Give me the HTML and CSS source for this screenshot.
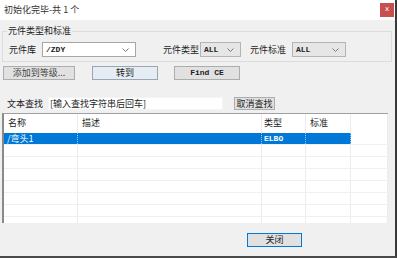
FILE: index.html
```html
<!DOCTYPE html>
<html lang="zh">
<head>
  <meta charset="UTF-8" />
  <title>初始化完毕-共 1 个</title>
  <link rel="stylesheet" href="styles.css">
</head>
<body>
  <div class="window">
    <div class="titlebar">
      <span class="title">初始化完毕-共 1 个</span>
      <span class="close">x</span>
    </div>

    <fieldset class="group">
      <legend>元件类型和标准</legend>
      <div class="row">
        <label class="lbl lib">元件库</label>
        <div class="combo combo-lib">
          <span class="mono">/ZDY</span>
          <svg class="chev" viewBox="0 0 7 4"><polyline points="0.5,0.5 3.5,3.5 6.5,0.5"/></svg>
        </div>
        <label class="lbl type">元件类型</label>
        <div class="combo combo-type gray">
          <span class="mono">ALL</span>
          <svg class="chev" viewBox="0 0 7 4"><polyline points="0.5,0.5 3.5,3.5 6.5,0.5"/></svg>
        </div>
        <label class="lbl std">元件标准</label>
        <div class="combo combo-std gray">
          <span class="mono">ALL</span>
          <svg class="chev" viewBox="0 0 7 4"><polyline points="0.5,0.5 3.5,3.5 6.5,0.5"/></svg>
        </div>
      </div>
    </fieldset>

    <div class="buttons">
      <button class="btn btn-add">添加到等级...</button>
      <button class="btn btn-goto">转到</button>
      <button class="btn btn-find">Find CE</button>
    </div>

    <div class="search">
      <label class="lbl">文本查找</label>
      <div class="input">[输入查找字符串后回车]</div>
      <button class="btn btn-cancel">取消查找</button>
    </div>

    <div class="list">
      <div class="lrow head">
        <div class="c c1">名称</div>
        <div class="c c2">描述</div>
        <div class="c c3">类型</div>
        <div class="c c4">标准</div>
        <div class="c c5"></div>
      </div>
      <div class="lrow sel">
        <div class="c c1">/弯头1</div>
        <div class="c c2"></div>
        <div class="c c3 mono">ELBO</div>
        <div class="c c4"></div>
        <div class="c c5"></div>
      </div>
      <div class="lrow"><div class="c c1"></div><div class="c c2"></div><div class="c c3"></div><div class="c c4"></div><div class="c c5"></div></div>
      <div class="lrow"><div class="c c1"></div><div class="c c2"></div><div class="c c3"></div><div class="c c4"></div><div class="c c5"></div></div>
      <div class="lrow"><div class="c c1"></div><div class="c c2"></div><div class="c c3"></div><div class="c c4"></div><div class="c c5"></div></div>
      <div class="lrow"><div class="c c1"></div><div class="c c2"></div><div class="c c3"></div><div class="c c4"></div><div class="c c5"></div></div>
      <div class="lrow"><div class="c c1"></div><div class="c c2"></div><div class="c c3"></div><div class="c c4"></div><div class="c c5"></div></div>
      <div class="lrow"><div class="c c1"></div><div class="c c2"></div><div class="c c3"></div><div class="c c4"></div><div class="c c5"></div></div>
      <div class="lrow"><div class="c c1"></div><div class="c c2"></div><div class="c c3"></div><div class="c c4"></div><div class="c c5"></div></div>
    </div>

    <div class="footer">
      <button class="btn btn-close">关闭</button>
    </div>
  </div>
</body>
</html>
```

FILE: styles.css
```css
* { box-sizing: border-box; }

body {
  margin: 0;
  font-family: "Noto Sans CJK SC", "Noto Sans", sans-serif;
  font-size: 9px;
  color: #222;
}

.mono {
  font-family: "Liberation Mono", "DejaVu Sans Mono", monospace;
  font-size: 8px;
  font-weight: bold;
}

.window {
  width: 397px;
  height: 258px;
  background: #f0f0f0;
  border-right: 2px solid #3a3a3a;
  border-bottom: 2px solid #4a4a4a;
  overflow: hidden;
}

/* Title bar */
.titlebar {
  height: 20px;
  background: #fff;
  display: flex;
  align-items: center;
  padding: 0 1px 0 4px;
}
.title {
  color: #333;
  font-size: 9px;
  line-height: 12px;
}
.close {
  margin-left: auto;
  width: 14px;
  height: 14px;
  background: #c94f4f;
  color: #fff;
  font-family: "DejaVu Sans", sans-serif;
  font-size: 7px;
  line-height: 13px;
  text-align: center;
}

/* Group box */
.group {
  margin: 5px 3px 0 2px;
  padding: 5px 0 4px 6px;
  border: 1px solid #dcdcdc;
  height: 37px;
}
.group legend {
  padding: 0 1px;
  margin-left: -2px;
  line-height: 12px;
  height: 12px;
  color: #222;
}
.row {
  display: flex;
  align-items: center;
  height: 15px;
}
.lbl { line-height: 12px; white-space: nowrap; }
.lbl.lib  { width: 33px; }
.lbl.type { margin-left: 27px; width: 37px; }
.lbl.std  { margin-left: 9px; width: 42px; }

.combo {
  height: 15px;
  border: 1px solid #a6a6a6;
  background: #fff;
  display: flex;
  align-items: center;
  padding: 0 6px 0 3px;
}
.combo.gray { background: #e6e6e6; border-color: #b4b4b4; }
.combo-lib  { width: 94px; }
.combo-type { width: 41px; }
.combo-std  { width: 54px; }
.chev {
  margin-left: auto;
  width: 7px;
  height: 4px;
  fill: none;
  stroke: #7a7a7a;
  stroke-width: 1;
}

/* Buttons */
.btn {
  font-family: "Noto Sans CJK SC", "Noto Sans", sans-serif;
  font-size: 9px;
  line-height: 12px;
  height: 14px;
  padding: 0;
  margin: 0;
  background: #e1e1e1;
  border: 1px solid #adadad;
  color: #222;
}
.buttons {
  display: flex;
  margin-top: 4px;
  padding-left: 3px;
}
.btn-add    { width: 72px; color: #444; }
.btn-goto   { width: 66px; margin-left: 17px; background: #e5ecf4; border-color: #9aa6b3; }
.btn-find {
  width: 66px;
  margin-left: 16px;
  font-family: "Liberation Mono", "DejaVu Sans Mono", monospace;
  font-size: 8px;
  font-weight: bold;
}

/* Search row */
.search {
  display: flex;
  align-items: center;
  margin-top: 17px;
  padding-left: 7px;
  height: 13px;
}
.search .lbl { width: 41px; }
.input {
  width: 175px;
  height: 13px;
  background: #fff;
  border: 1px solid #f4f4f4;
  line-height: 11px;
  padding-left: 1px;
  white-space: nowrap;
}
.btn-cancel { width: 41px; height: 13px; margin-left: 11px; line-height: 11px; }

/* List */
.list {
  margin: 3px 0 0 2px;
  width: 386px;
  height: 110px;
  background: #fff;
  border-left: 2px solid #8a8a8a;
  border-top: 1px solid #a0a0a0;
  overflow: hidden;
}
.lrow {
  display: flex;
  height: 12px;
  border-bottom: 1px solid #f0f0f0;
}
.lrow.head {
  height: 19px;
  border-bottom: none;
  align-items: stretch;
}
.lrow.head .c { line-height: 18px; }
.c {
  border-right: 1px solid #ececec;
  padding-left: 4px;
  line-height: 11px;
  white-space: nowrap;
}
.c1 { width: 74px; }
.c2 { width: 184px; }
.c3 { width: 44px; padding-left: 2px; }
.c4 { width: 45px; }
.c5 { flex: 1; }

.lrow.sel .c1,
.lrow.sel .c2,
.lrow.sel .c3,
.lrow.sel .c4 {
  background: #0078d7;
  color: #fff;
  border-right: 1px dotted #9cc8ee;
}
.lrow.sel .c1 { padding-left: 3px; }

/* Footer */
.footer {
  margin-top: 10px;
  padding-left: 247px;
}
.btn-close {
  width: 55px;
  border: 1px solid #0078d7;
}
```
